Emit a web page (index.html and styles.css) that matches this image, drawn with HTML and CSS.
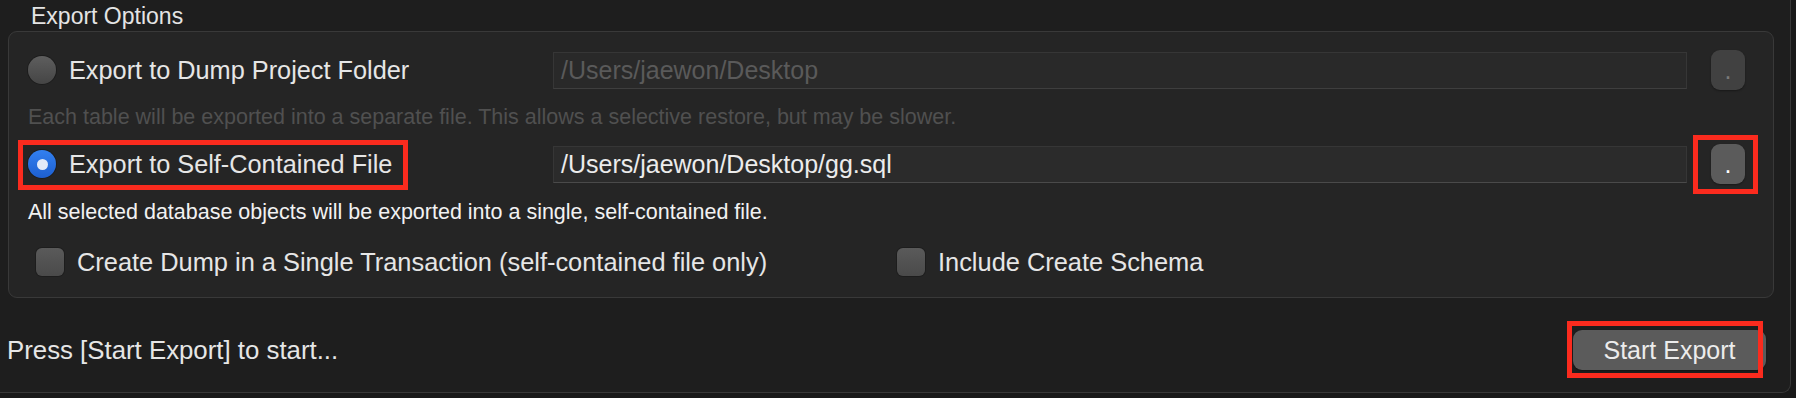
FILE: index.html
```html
<!DOCTYPE html>
<html lang="en">
<head>
    <meta charset="UTF-8">
    <meta name="viewport" content="width=device-width, initial-scale=1.0">
    <title>Export Options</title>
    <link rel="stylesheet" href="styles.css">
</head>
<body>
    <div class="window">
        <div class="legend">Export Options</div>
        <div class="group">
            <div class="row">
                <div class="option-col">
                    <label class="option">
                        <span class="radio"></span>
                        <span>Export to Dump Project Folder</span>
                    </label>
                </div>
                <div class="path path-off">/Users/jaewon/Desktop</div>
                <button class="browse browse-off">.</button>
            </div>
            <p class="hint hint-off">Each table will be exported into a separate file. This allows a selective restore, but may be slower.</p>
            <div class="row row-second">
                <div class="option-col">
                    <label class="option marked mark-option">
                        <span class="radio radio-on"></span>
                        <span>Export to Self-Contained File</span>
                    </label>
                </div>
                <div class="path">/Users/jaewon/Desktop/gg.sql</div>
                <button class="browse marked mark-browse">.</button>
            </div>
            <p class="hint hint-second">All selected database objects will be exported into a single, self-contained file.</p>
            <div class="checks">
                <label class="check check-first"><span class="box"></span>Create Dump in a Single Transaction (self-contained file only)</label>
                <label class="check"><span class="box"></span>Include Create Schema</label>
            </div>
        </div>
        <div class="footer">
            <span class="status">Press [Start Export] to start...</span>
            <button class="start marked mark-start">Start Export</button>
        </div>
    </div>
</body>
</html>
```

FILE: styles.css
```css
* {
    box-sizing: border-box;
}
html, body {
    height: 100%;
}
body {
    margin: 0;
    background-color: #191919;
    font-family: "Liberation Sans", Arial, sans-serif;
    color: #e6e6e6;
}
.window {
    width: 1791px;
    height: 393px;
    background-color: #1e1e1e;
    border-right: 1px solid #383838;
    border-bottom: 1px solid #383838;
    border-bottom-right-radius: 9px;
}
.legend {
    height: 31px;
    padding-left: 31px;
    padding-top: 2px;
    font-size: 23px;
    line-height: 28px;
    color: #e4e4e4;
}
.group {
    margin: 0 16px 0 8px;
    height: 267px;
    padding: 18px 28px 21px 19px;
    background-color: #252525;
    border: 1px solid #393939;
    border-radius: 9px;
}
.row {
    display: flex;
    align-items: center;
    height: 40px;
}
.row-second {
    margin-top: 15px;
}
.option-col {
    width: 525px;
    flex-shrink: 0;
}
.option {
    display: inline-flex;
    align-items: center;
    gap: 13px;
    margin-top: 4px;
    font-size: 25.3px;
    line-height: 28px;
    color: #e6e6e6;
}
.radio {
    width: 28px;
    height: 28px;
    border-radius: 50%;
    background: linear-gradient(#5e5e5e, #454545);
    box-shadow: 0 0 0 1px rgba(0, 0, 0, 0.25);
    flex-shrink: 0;
}
.radio-on {
    background: linear-gradient(#3280f0, #1d5fd0);
    position: relative;
}
.radio-on::before {
    content: "";
    position: absolute;
    width: 11px;
    height: 11px;
    top: 8.5px;
    left: 8.5px;
    border-radius: 50%;
    background-color: #e2eaf8;
}
.path {
    flex: 1;
    height: 37px;
    margin-right: 24px;
    padding-left: 7px;
    background-color: #2b2b2b;
    border: 1px solid #363636;
    border-bottom-color: #4a4a4a;
    font-size: 25px;
    line-height: 35px;
    color: #ececec;
}
.path-off {
    color: #5a5a5a;
    background-color: #292929;
    border-bottom-color: #3e3e3e;
}
.browse {
    width: 34px;
    height: 40px;
    padding: 0;
    border: none;
    border-radius: 9px;
    background-color: #5b5b5b;
    box-shadow: 0 1px 2px rgba(0, 0, 0, 0.35);
    font-family: inherit;
    font-size: 25px;
    line-height: 40px;
    color: #ffffff;
    flex-shrink: 0;
}
.browse-off {
    background-color: #414141;
    color: #7a7a7a;
}
.hint {
    margin: 15px 0 0 0;
    font-size: 21.5px;
    line-height: 24px;
    color: #f2f2f2;
}
.hint-off {
    color: #505050;
}
.hint-second {
    margin-top: 16px;
}
.checks {
    display: flex;
    align-items: center;
    margin-top: 24px;
    padding-left: 8px;
    height: 28px;
}
.check {
    display: flex;
    align-items: center;
    gap: 13px;
    font-size: 25.4px;
    line-height: 28px;
    color: #e6e6e6;
}
.check-first {
    width: 861px;
}
.box {
    width: 28px;
    height: 28px;
    border-radius: 6px;
    background: linear-gradient(#5a5a5a, #4a4a4a);
    box-shadow: 0 0 0 1px rgba(0, 0, 0, 0.2);
    flex-shrink: 0;
}
.footer {
    display: flex;
    justify-content: space-between;
    align-items: flex-start;
    padding: 32px 24px 0 7px;
}
.status {
    font-size: 25.8px;
    line-height: 40px;
    color: #e6e6e6;
}
.start {
    width: 193px;
    height: 40px;
    border: none;
    border-radius: 9px;
    background-color: #5b5b5b;
    box-shadow: 0 1px 2px rgba(0, 0, 0, 0.35);
    font-family: inherit;
    font-size: 25px;
    color: #ececec;
}

/* red annotation boxes */
.marked {
    position: relative;
}
.marked::after {
    content: "";
    position: absolute;
    border: 5px solid #fb2b1e;
    pointer-events: none;
    z-index: 2;
}
.mark-option::after {
    top: -10px;
    right: -16px;
    bottom: -12px;
    left: -10px;
}
.mark-browse::after {
    top: -9px;
    right: -13px;
    bottom: -10px;
    left: -18px;
}
.mark-start::after {
    top: -9px;
    right: 3px;
    bottom: -8px;
    left: -6px;
}
```
